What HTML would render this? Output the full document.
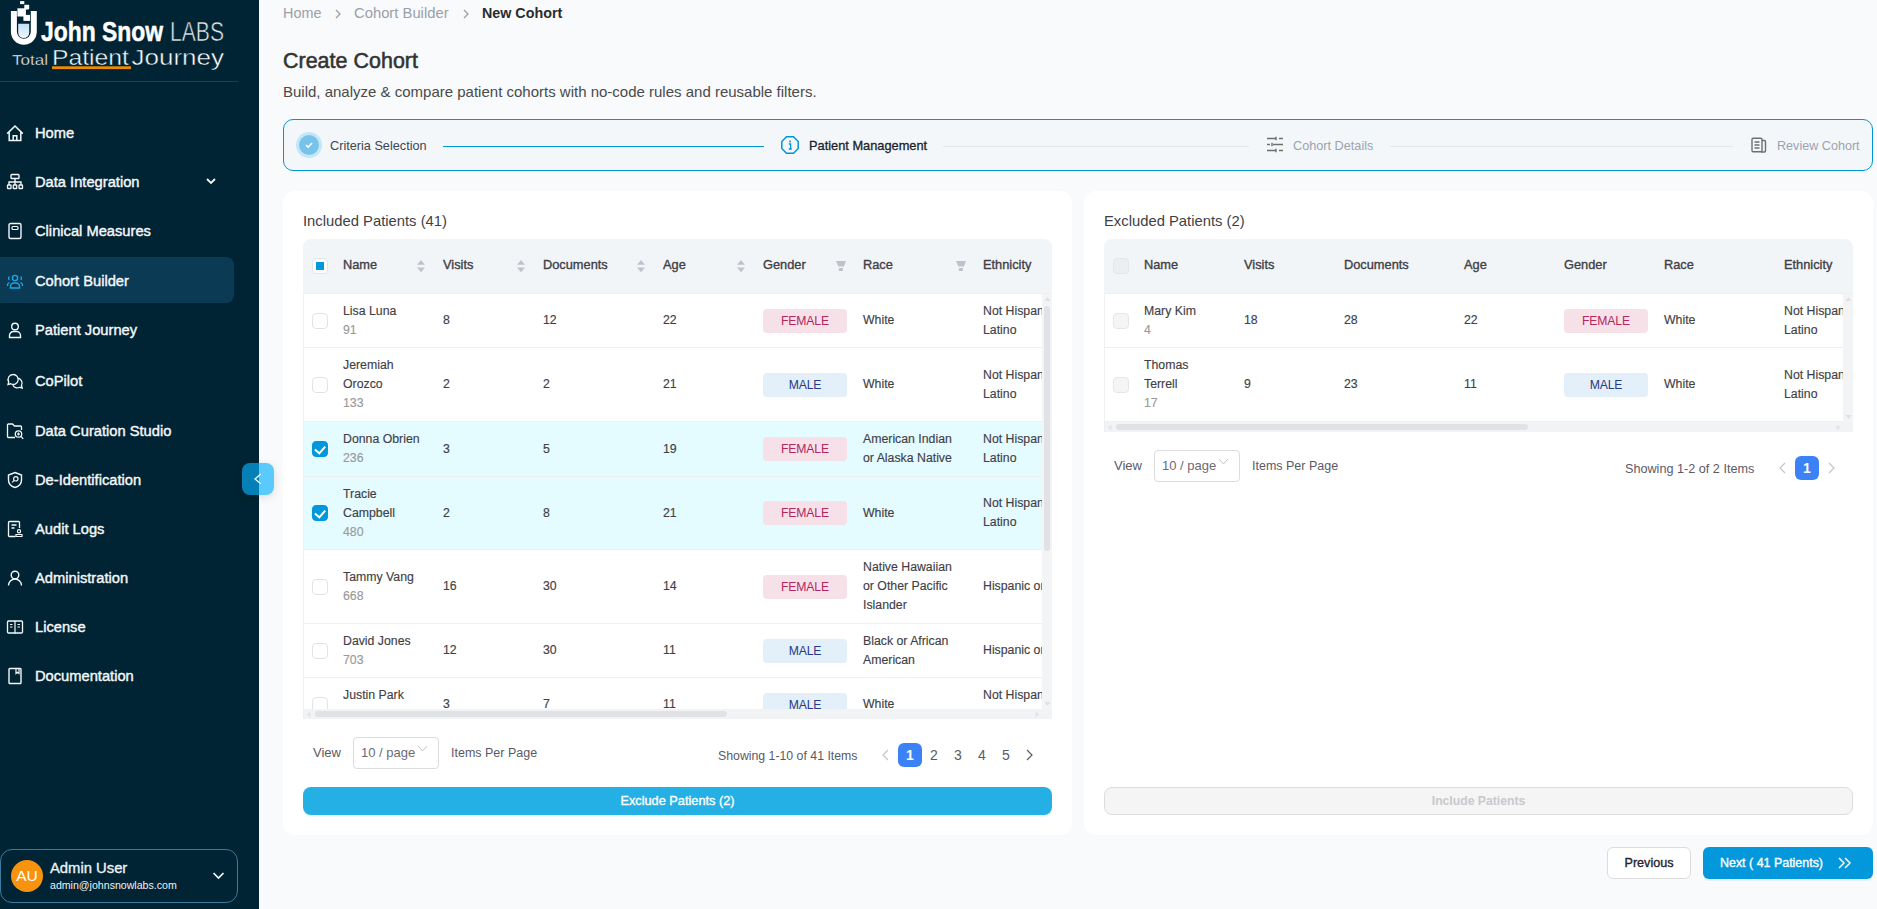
<!DOCTYPE html>
<html><head><meta charset="utf-8"><style>
*{box-sizing:border-box;margin:0;padding:0}
html,body{width:1877px;height:909px;overflow:hidden}
body{position:relative;background:#f8fafc;font-family:"Liberation Sans", sans-serif;color:#3f3f46}
.a{position:absolute;white-space:nowrap}
#sb{position:absolute;left:0;top:0;width:259px;height:909px;background:#002433}
.nav{position:absolute;left:35px;font-size:14.7px;font-weight:400;color:#f4f7fa;line-height:18px;-webkit-text-stroke:0.4px #f4f7fa}
.ic{position:absolute;left:6px;width:18px;height:18px}
.card{position:absolute;background:#fff;border-radius:12px}
.th{position:absolute;font-size:12.8px;font-weight:400;color:#3f3f46;line-height:16px;-webkit-text-stroke:0.35px #3f3f46}
.cell{position:absolute;font-size:12.3px;line-height:19px;color:#3f3f46;-webkit-text-stroke:0.15px currentColor}
.gid{color:#9a9a9a}
.tag{position:absolute;width:84px;height:24px;border-radius:4px;font-size:12.2px;line-height:24px;text-align:center;letter-spacing:-0.15px}
.fe{background:#f7e1e9;color:#b3285c}
.ma{background:#e3eff9;color:#2a3a8a}
.cb{position:absolute;width:16px;height:16px;border:1px solid #e1e3e7;border-radius:4px;background:#fff}
.cbx{background:#0097dc;border-color:#0097dc}
.pg{position:absolute;font-size:13px;color:#5a5a66;line-height:16px}
</style></head><body>

<div id="sb">
<svg class="a" style="left:0;top:0" width="259" height="82" viewBox="0 0 259 82">
<defs><linearGradient id="tg" x1="0" y1="0" x2="0" y2="1"><stop offset="0" stop-color="#c3e1f7"/><stop offset="1" stop-color="#eef7fd"/></linearGradient></defs>
<rect x="20.1" y="1.1" width="4.2" height="3" fill="#fff"/>
<rect x="24.3" y="4.7" width="4.9" height="4.7" rx="0.8" fill="#fff"/>
<rect x="17.4" y="8.3" width="8.5" height="8.2" fill="#fff"/>
<rect x="23.4" y="14.9" width="6.6" height="6" fill="#fff"/>
<path d="M13.9 11 V31.85 a9.95 9.95 0 0 0 19.9 0 V11" fill="none" stroke="#fff" stroke-width="6"/>
<path d="M18.2 23.7 h11 v8.8 a5.5 5.5 0 0 1 -11 0 z" fill="url(#tg)"/>
<text x="41" y="41" font-family="Liberation Sans" font-weight="700" font-size="27.5" fill="#fff" stroke="#fff" stroke-width="0.5" textLength="122" lengthAdjust="spacingAndGlyphs">John Snow</text>
<text x="170" y="41" font-family="Liberation Sans" font-weight="400" font-size="27.5" fill="#e8e8e8" stroke="#002433" stroke-width="0.6" textLength="54" lengthAdjust="spacingAndGlyphs">LABS</text>
<text x="12" y="65" font-family="Liberation Sans" font-size="14.5" fill="#fff" stroke="#002433" stroke-width="0.35" textLength="36" lengthAdjust="spacingAndGlyphs">Total</text>
<text x="52" y="65" font-family="Liberation Sans" font-size="22" fill="#fff" stroke="#002433" stroke-width="0.45" textLength="77" lengthAdjust="spacingAndGlyphs">Patient</text>
<text x="131.5" y="65" font-family="Liberation Sans" font-size="22" fill="#fff" stroke="#002433" stroke-width="0.45" textLength="92.5" lengthAdjust="spacingAndGlyphs">Journey</text>
<rect x="52" y="66.3" width="79" height="2.8" fill="#f08a00"/>
<rect x="0" y="81" width="238" height="1" fill="#16425a"/>
</svg>
<div class="a" style="left:0;top:257px;width:234px;height:46px;background:#0b3a55;border-radius:0 8px 8px 0"></div>
<svg class="ic" style="top:124.2px" viewBox="0 0 18 18"><path d="M1.2 9.6 L9 2 L16.8 9.6 M3.2 7.8 V16.6 H14.8 V7.8 M7.2 16.6 V11.8 H10.8 V16.6" fill="none" stroke="#f4f7fa" stroke-width="1.5" stroke-linejoin="miter"/></svg>
<div class="nav" style="top:124.2px">Home</div>
<svg class="ic" style="top:173.0px" viewBox="0 0 18 18"><rect x="5" y="1.5" width="8" height="4" rx="0.8" fill="none" stroke="#f4f7fa" stroke-width="1.4"/><path d="M9 5.5V9 M3 12V9H15V12 M9 9V12" fill="none" stroke="#f4f7fa" stroke-width="1.4"/><rect x="1.5" y="12" width="3.5" height="3.5" rx="0.6" fill="none" stroke="#f4f7fa" stroke-width="1.3"/><rect x="7.25" y="12" width="3.5" height="3.5" rx="0.6" fill="none" stroke="#f4f7fa" stroke-width="1.3"/><rect x="13" y="12" width="3.5" height="3.5" rx="0.6" fill="none" stroke="#f4f7fa" stroke-width="1.3"/></svg>
<div class="nav" style="top:173.0px">Data Integration</div>
<svg class="ic" style="top:222.2px" viewBox="0 0 18 18"><rect x="3" y="1.5" width="12" height="15" rx="1.5" fill="none" stroke="#f4f7fa" stroke-width="1.4"/><rect x="6" y="4.5" width="6" height="3" rx="1" fill="none" stroke="#f4f7fa" stroke-width="1.2"/></svg>
<div class="nav" style="top:222.2px">Clinical Measures</div>
<svg class="ic" style="top:272.0px" viewBox="0 0 18 18"><circle cx="9" cy="6" r="2.6" fill="none" stroke="#1ea7e4" stroke-width="1.4"/><path d="M4.5 16v-1.5a3.5 3.5 0 0 1 3.5-3.5h2a3.5 3.5 0 0 1 3.5 3.5V16z" fill="none" stroke="#1ea7e4" stroke-width="1.4"/><path d="M3.5 4.5a2 2 0 0 0 0 3.5 M14.5 4.5a2 2 0 0 1 0 3.5 M1.5 14v-1a2.5 2.5 0 0 1 2-2.4 M16.5 14v-1a2.5 2.5 0 0 0 -2-2.4" fill="none" stroke="#1ea7e4" stroke-width="1.3"/></svg>
<div class="nav" style="top:272.0px">Cohort Builder</div>
<svg class="ic" style="top:321.0px" viewBox="0 0 18 18"><circle cx="9" cy="5.5" r="3.3" fill="none" stroke="#f4f7fa" stroke-width="1.4"/><path d="M3.5 16.5v-2a4 4 0 0 1 4-4h3a4 4 0 0 1 4 4v2z" fill="none" stroke="#f4f7fa" stroke-width="1.4"/></svg>
<div class="nav" style="top:321.0px">Patient Journey</div>
<svg class="ic" style="top:372.3px" viewBox="0 0 18 18"><path d="M7 2.5a5 5 0 0 0-4.3 7.5L2 12.5l2.7-.7A5 5 0 1 0 7 2.5z" fill="none" stroke="#f4f7fa" stroke-width="1.3"/><path d="M11.5 6.2a5 5 0 0 1 4 7.3l.7 2.5-2.6-.7a5 5 0 0 1-6.8-2" fill="none" stroke="#f4f7fa" stroke-width="1.3"/></svg>
<div class="nav" style="top:372.3px">CoPilot</div>
<svg class="ic" style="top:422.4px" viewBox="0 0 18 18"><path d="M9 15.5H2.5a1 1 0 0 1-1-1V3a1 1 0 0 1 1-1h4l2 2h6a1 1 0 0 1 1 1v3" fill="none" stroke="#f4f7fa" stroke-width="1.3"/><circle cx="12.5" cy="12" r="3.2" fill="none" stroke="#f4f7fa" stroke-width="1.3"/><path d="M15 14.5l2.3 2.3 M12.5 10.5v3 M11 12h3" fill="none" stroke="#f4f7fa" stroke-width="1.2"/></svg>
<div class="nav" style="top:422.4px">Data Curation Studio</div>
<svg class="ic" style="top:470.9px" viewBox="0 0 18 18"><path d="M9 1.5l6.5 2.5v5c0 4-3 6.5-6.5 7.5C5.5 15.5 2.5 13 2.5 9V4z" fill="none" stroke="#f4f7fa" stroke-width="1.4"/><circle cx="9.8" cy="7.8" r="2.2" fill="none" stroke="#f4f7fa" stroke-width="1.2"/><path d="M8.2 9.4l-2 2" stroke="#f4f7fa" stroke-width="1.2"/></svg>
<div class="nav" style="top:470.9px">De-Identification</div>
<svg class="ic" style="top:520.4px" viewBox="0 0 18 18"><path d="M9.5 16.5H3.5a1 1 0 0 1-1-1V2.5a1 1 0 0 1 1-1h9a1 1 0 0 1 1 1V8" fill="none" stroke="#f4f7fa" stroke-width="1.3"/><path d="M5.5 5h5 M5.5 8h3" stroke="#f4f7fa" stroke-width="1.3"/><circle cx="13" cy="11.3" r="1.6" fill="none" stroke="#f4f7fa" stroke-width="1.2"/><path d="M10 16.5h6v-2h-6z" fill="none" stroke="#f4f7fa" stroke-width="1.2"/></svg>
<div class="nav" style="top:520.4px">Audit Logs</div>
<svg class="ic" style="top:569.2px" viewBox="0 0 18 18"><circle cx="9" cy="6" r="3.8" fill="none" stroke="#f4f7fa" stroke-width="1.4"/><path d="M2.5 16.5a6.5 6.5 0 0 1 13 0" fill="none" stroke="#f4f7fa" stroke-width="1.4"/></svg>
<div class="nav" style="top:569.2px">Administration</div>
<svg class="ic" style="top:618.0px" viewBox="0 0 18 18"><rect x="1.5" y="3" width="15" height="12" rx="1" fill="none" stroke="#f4f7fa" stroke-width="1.3"/><path d="M9 3v12.5 M4 6.5h2.5 M4 9h2.5 M11.5 6.5H14 M11.5 9H14" stroke="#f4f7fa" stroke-width="1.2"/></svg>
<div class="nav" style="top:618.0px">License</div>
<svg class="ic" style="top:667.0px" viewBox="0 0 18 18"><rect x="3" y="1.5" width="12" height="15" rx="0.8" fill="none" stroke="#f4f7fa" stroke-width="1.4"/><path d="M10 1.5v5l1.5-1.2 1.5 1.2v-5" fill="none" stroke="#f4f7fa" stroke-width="1.2"/></svg>
<div class="nav" style="top:667.0px">Documentation</div>
<svg class="a" style="left:205px;top:176px" width="12" height="10" viewBox="0 0 12 10"><path d="M2 3l4 4 4-4" fill="none" stroke="#f4f7fa" stroke-width="1.8"/></svg>
<div class="a" style="left:0;top:849px;width:238px;height:54px;border:1px solid #3a7a9c;border-radius:12px"></div>
<div class="a" style="left:11px;top:860px;width:32px;height:32px;border-radius:50%;background:#f7930f;color:#fff;font-size:15.5px;line-height:32px;text-align:center">AU</div>
<div class="a" style="left:50px;top:860px;font-size:14.8px;font-weight:400;color:#eef2f6;-webkit-text-stroke:0.35px #eef2f6;line-height:17px">Admin User</div>
<div class="a" style="left:50px;top:879px;font-size:10.6px;color:#eef2f6;line-height:13px">admin@johnsnowlabs.com</div>
<svg class="a" style="left:212px;top:870px" width="13" height="11" viewBox="0 0 13 11"><path d="M1.5 3l5 5 5-5" fill="none" stroke="#f4f7fa" stroke-width="1.7"/></svg>
</div>
<div class="a" style="left:242px;top:463px;width:32px;height:32px;border-radius:8px;background:rgba(8,176,252,0.66);box-shadow:0 2px 8px rgba(0,0,0,0.12)"></div>
<svg class="a" style="left:252px;top:472px" width="12" height="14" viewBox="0 0 12 14"><path d="M8.8 2L3 7l5.8 4.8" fill="none" stroke="#f0faff" stroke-width="1.3"/></svg>
<div class="a" style="left:283px;top:5px;font-size:14.4px;color:#9aa0a9;line-height:17px">Home</div>
<svg class="a" style="left:333px;top:8px" width="10" height="12" viewBox="0 0 10 12"><path d="M3 2l4 4-4 4" fill="none" stroke="#9aa0a9" stroke-width="1.3"/></svg>
<div class="a" style="left:354px;top:5px;font-size:14.8px;color:#9aa0a9;line-height:17px">Cohort Builder</div>
<svg class="a" style="left:461px;top:8px" width="10" height="12" viewBox="0 0 10 12"><path d="M3 2l4 4-4 4" fill="none" stroke="#9aa0a9" stroke-width="1.3"/></svg>
<div class="a" style="left:482px;top:5px;font-size:14.3px;font-weight:700;color:#2b2b2b;line-height:17px">New Cohort</div>
<div class="a" style="left:283px;top:49px;font-size:21.4px;font-weight:400;color:#333333;line-height:25px;-webkit-text-stroke:0.55px #333333;letter-spacing:0.05px">Create Cohort</div>
<div class="a" style="left:283px;top:83px;font-size:15px;color:#4a4a4a;line-height:17px">Build, analyze &amp; compare patient cohorts with no-code rules and reusable filters.</div>
<div class="a" style="left:283px;top:119px;width:1590px;height:52px;border:1.5px solid #0096da;border-radius:10px;background:#f3f7fa"></div>
<div class="a" style="left:296px;top:132px;width:26px;height:26px;border-radius:50%;background:#c5e5f8"></div>
<div class="a" style="left:299px;top:135px;width:20px;height:20px;border-radius:50%;background:#78c3ea"></div>
<svg class="a" style="left:303px;top:139px" width="12" height="12" viewBox="0 0 12 12"><path d="M3 6.2l2.1 2L9 4" fill="none" stroke="#fff" stroke-width="1.6"/></svg>
<div class="a" style="left:330px;top:138px;font-size:12.7px;color:#3f4650;line-height:16px">Criteria Selection</div>
<div class="a" style="left:443px;top:145.5px;width:321px;height:1.5px;background:#0096da"></div>
<svg class="a" style="left:780px;top:135px" width="20" height="20" viewBox="0 0 20 20"><path d="M6.5 1.8h7l4.7 4.7v7l-4.7 4.7h-7l-4.7-4.7v-7z" fill="none" stroke="#0096da" stroke-width="1.5"/><circle cx="10" cy="6.6" r="1" fill="#0096da"/><path d="M8.8 9h1.8v5 M8.8 14h3" fill="none" stroke="#0096da" stroke-width="1.4"/></svg>
<div class="a" style="left:809px;top:138px;font-size:12.8px;font-weight:400;color:#1a1f2b;-webkit-text-stroke:0.3px #1a1f2b;line-height:16px">Patient Management</div>
<div class="a" style="left:943px;top:145.5px;width:306px;height:1px;background:#e3e6ea"></div>
<svg class="a" style="left:1266px;top:136px" width="18" height="18" viewBox="0 0 18 18"><path d="M1 2.5h9 M13 2.5h4 M1 8.5h3 M7 8.5h10 M1 14.5h9 M13 14.5h4 M10 0.8v3.5 M6 6.8v3.5 M10 12.8v3.5" fill="none" stroke="#6f6f6f" stroke-width="1.4"/></svg>
<div class="a" style="left:1293px;top:138px;font-size:12.7px;color:#9ca3af;line-height:16px">Cohort Details</div>
<div class="a" style="left:1390px;top:145.5px;width:343px;height:1px;background:#e3e6ea"></div>
<svg class="a" style="left:1751px;top:137px" width="16" height="16" viewBox="0 0 16 16"><rect x="1" y="1.3" width="10" height="13.5" rx="1.2" fill="none" stroke="#6f6f6f" stroke-width="1.4"/><path d="M11 3.5h2.5a1 1 0 0 1 1 1v9.5a1 1 0 0 1-1 1H10" fill="none" stroke="#6f6f6f" stroke-width="1.4"/><path d="M3.5 5h5 M3.5 8h5 M3.5 11h5" stroke="#6f6f6f" stroke-width="1.3"/></svg>
<div class="a" style="left:1777px;top:138px;font-size:12.6px;color:#9ca3af;line-height:16px">Review Cohort</div>
<div class="card" style="left:283px;top:191px;width:789px;height:644px"></div>
<div class="card" style="left:1084px;top:191px;width:789px;height:644px"></div>
<div class="a" style="left:303px;top:213px;font-size:14.8px;color:#3f3f46;line-height:17px">Included Patients (41)</div>
<div class="a" style="left:1104px;top:213px;font-size:14.8px;color:#3f3f46;line-height:17px">Excluded Patients (2)</div>
<div class="a" style="left:303px;top:239px;width:749px;height:55px;background:#f2f5f8;border-bottom:1px solid #edf0f3;border-radius:8px 8px 0 0"></div>
<div class="cb" style="left:312px;top:258px"></div>
<div class="a" style="left:316px;top:262px;width:8px;height:8px;background:#0097dc"></div>
<div class="th" style="left:343px;top:257px">Name</div>
<div class="th" style="left:443px;top:257px">Visits</div>
<div class="th" style="left:543px;top:257px">Documents</div>
<div class="th" style="left:663px;top:257px">Age</div>
<div class="th" style="left:763px;top:257px">Gender</div>
<div class="th" style="left:863px;top:257px">Race</div>
<div class="th" style="left:983px;top:257px">Ethnicity</div>
<svg class="a" style="left:417px;top:260px" width="9" height="13" viewBox="0 0 9 13"><path d="M4 0L8 4.8H0z M4 12.3L8 7.4H0z" fill="#bfc3cc"/></svg>
<svg class="a" style="left:517px;top:260px" width="9" height="13" viewBox="0 0 9 13"><path d="M4 0L8 4.8H0z M4 12.3L8 7.4H0z" fill="#bfc3cc"/></svg>
<svg class="a" style="left:637px;top:260px" width="9" height="13" viewBox="0 0 9 13"><path d="M4 0L8 4.8H0z M4 12.3L8 7.4H0z" fill="#bfc3cc"/></svg>
<svg class="a" style="left:737px;top:260px" width="9" height="13" viewBox="0 0 9 13"><path d="M4 0L8 4.8H0z M4 12.3L8 7.4H0z" fill="#bfc3cc"/></svg>
<svg class="a" style="left:836px;top:261px" width="10" height="10" viewBox="0 0 10 10"><path d="M0 0H10L7.9 5.4H2.3z M2.9 7H6.9V9.9H2.9z" fill="#bfc3cc"/></svg>
<svg class="a" style="left:956px;top:261px" width="10" height="10" viewBox="0 0 10 10"><path d="M0 0H10L7.9 5.4H2.3z M2.9 7H6.9V9.9H2.9z" fill="#bfc3cc"/></svg>
<div class="a" style="left:303px;top:294px;width:739px;height:415px;overflow:hidden">
<div class="a" style="left:0;top:0px;width:739px;height:54px;background:#fff;border-bottom:1px solid #f0f0f0;border-left:1px solid #f0f0f0"></div>
<div class="cb" style="left:9px;top:18.5px;"></div>
<div class="cell" style="left:40px;top:8px"><div>Lisa Luna</div><div class="gid">91</div></div>
<div class="cell" style="left:140px;top:17px">8</div>
<div class="cell" style="left:240px;top:17px">12</div>
<div class="cell" style="left:360px;top:17px">22</div>
<div class="tag fe" style="left:460px;top:15px">FEMALE</div>
<div class="cell" style="left:560px;top:17px"><div>White</div></div>
<div class="cell" style="left:680px;top:8px"><div>Not Hispanic or</div><div>Latino</div></div>
<div class="a" style="left:0;top:54px;width:739px;height:74px;background:#fff;border-bottom:1px solid #f0f0f0;border-left:1px solid #f0f0f0"></div>
<div class="cb" style="left:9px;top:82.5px;"></div>
<div class="cell" style="left:40px;top:62px"><div>Jeremiah</div><div>Orozco</div><div class="gid">133</div></div>
<div class="cell" style="left:140px;top:81px">2</div>
<div class="cell" style="left:240px;top:81px">2</div>
<div class="cell" style="left:360px;top:81px">21</div>
<div class="tag ma" style="left:460px;top:79px">MALE</div>
<div class="cell" style="left:560px;top:81px"><div>White</div></div>
<div class="cell" style="left:680px;top:72px"><div>Not Hispanic or</div><div>Latino</div></div>
<div class="a" style="left:0;top:128px;width:739px;height:55px;background:#e4fbff;border-bottom:1px solid #f0f0f0;border-left:1px solid #f0f0f0"></div>
<div class="cb cbx" style="left:9px;top:147.0px;"><svg width="14" height="14" viewBox="0 0 14 14" style="position:absolute;left:0;top:0"><path d="M1.9 7.4L6.3 11.3L12.2 4.7" fill="none" stroke="#fff" stroke-width="2"/></svg></div>
<div class="cell" style="left:40px;top:136px"><div>Donna Obrien</div><div class="gid">236</div></div>
<div class="cell" style="left:140px;top:146px">3</div>
<div class="cell" style="left:240px;top:146px">5</div>
<div class="cell" style="left:360px;top:146px">19</div>
<div class="tag fe" style="left:460px;top:143px">FEMALE</div>
<div class="cell" style="left:560px;top:136px"><div>American Indian</div><div>or Alaska Native</div></div>
<div class="cell" style="left:680px;top:136px"><div>Not Hispanic or</div><div>Latino</div></div>
<div class="a" style="left:0;top:183px;width:739px;height:73px;background:#e4fbff;border-bottom:1px solid #f0f0f0;border-left:1px solid #f0f0f0"></div>
<div class="cb cbx" style="left:9px;top:211.0px;"><svg width="14" height="14" viewBox="0 0 14 14" style="position:absolute;left:0;top:0"><path d="M1.9 7.4L6.3 11.3L12.2 4.7" fill="none" stroke="#fff" stroke-width="2"/></svg></div>
<div class="cell" style="left:40px;top:191px"><div>Tracie</div><div>Campbell</div><div class="gid">480</div></div>
<div class="cell" style="left:140px;top:210px">2</div>
<div class="cell" style="left:240px;top:210px">8</div>
<div class="cell" style="left:360px;top:210px">21</div>
<div class="tag fe" style="left:460px;top:207px">FEMALE</div>
<div class="cell" style="left:560px;top:210px"><div>White</div></div>
<div class="cell" style="left:680px;top:200px"><div>Not Hispanic or</div><div>Latino</div></div>
<div class="a" style="left:0;top:256px;width:739px;height:74px;background:#fff;border-bottom:1px solid #f0f0f0;border-left:1px solid #f0f0f0"></div>
<div class="cb" style="left:9px;top:284.5px;"></div>
<div class="cell" style="left:40px;top:274px"><div>Tammy Vang</div><div class="gid">668</div></div>
<div class="cell" style="left:140px;top:283px">16</div>
<div class="cell" style="left:240px;top:283px">30</div>
<div class="cell" style="left:360px;top:283px">14</div>
<div class="tag fe" style="left:460px;top:281px">FEMALE</div>
<div class="cell" style="left:560px;top:264px"><div>Native Hawaiian</div><div>or Other Pacific</div><div>Islander</div></div>
<div class="cell" style="left:680px;top:283px"><div>Hispanic or Latino</div></div>
<div class="a" style="left:0;top:330px;width:739px;height:54px;background:#fff;border-bottom:1px solid #f0f0f0;border-left:1px solid #f0f0f0"></div>
<div class="cb" style="left:9px;top:348.5px;"></div>
<div class="cell" style="left:40px;top:338px"><div>David Jones</div><div class="gid">703</div></div>
<div class="cell" style="left:140px;top:347px">12</div>
<div class="cell" style="left:240px;top:347px">30</div>
<div class="cell" style="left:360px;top:347px">11</div>
<div class="tag ma" style="left:460px;top:345px">MALE</div>
<div class="cell" style="left:560px;top:338px"><div>Black or African</div><div>American</div></div>
<div class="cell" style="left:680px;top:347px"><div>Hispanic or Latino</div></div>
<div class="a" style="left:0;top:384px;width:739px;height:54px;background:#fff;border-bottom:1px solid #f0f0f0;border-left:1px solid #f0f0f0"></div>
<div class="cb" style="left:9px;top:402.5px;"></div>
<div class="cell" style="left:40px;top:392px"><div>Justin Park</div><div class="gid">781</div></div>
<div class="cell" style="left:140px;top:401px">3</div>
<div class="cell" style="left:240px;top:401px">7</div>
<div class="cell" style="left:360px;top:401px">11</div>
<div class="tag ma" style="left:460px;top:399px">MALE</div>
<div class="cell" style="left:560px;top:401px"><div>White</div></div>
<div class="cell" style="left:680px;top:392px"><div>Not Hispanic or</div><div>Latino</div></div>
</div>
<div class="a" style="left:1042px;top:294px;width:10px;height:415px;background:#f3f4f6"></div>
<div class="a" style="left:1044px;top:306px;width:6px;height:245px;background:#e1e2e6;border-radius:3px"></div>
<svg class="a" style="left:1044px;top:296px" width="7" height="6" viewBox="0 0 7 6"><path d="M3.5 1L6.5 5H0.5z" fill="#dfe0e4"/></svg>
<svg class="a" style="left:1044px;top:701px" width="7" height="6" viewBox="0 0 7 6"><path d="M3.5 5L6.5 1H0.5z" fill="#dfe0e4"/></svg>
<div class="a" style="left:303px;top:709px;width:749px;height:10px;background:#f2f3f5;border-left:1px solid #eeeeee"></div>
<div class="a" style="left:315px;top:711px;width:412px;height:6px;background:#e1e2e6;border-radius:3px"></div>
<svg class="a" style="left:305px;top:711px" width="7" height="7" viewBox="0 0 7 7"><path d="M1.5 3.5L5.5 0.5V6.5z" fill="#e3e4e8"/></svg>
<svg class="a" style="left:1034px;top:711px" width="7" height="7" viewBox="0 0 7 7"><path d="M5.5 3.5L1.5 0.5V6.5z" fill="#e3e4e8"/></svg>
<div class="a" style="left:1104px;top:239px;width:749px;height:55px;background:#f2f5f8;border-bottom:1px solid #edf0f3;border-radius:8px 8px 0 0"></div>
<div class="cb" style="left:1113px;top:258px;background:#eceef1;border-color:#e4e6e9"></div>
<div class="th" style="left:1144px;top:257px">Name</div>
<div class="th" style="left:1244px;top:257px">Visits</div>
<div class="th" style="left:1344px;top:257px">Documents</div>
<div class="th" style="left:1464px;top:257px">Age</div>
<div class="th" style="left:1564px;top:257px">Gender</div>
<div class="th" style="left:1664px;top:257px">Race</div>
<div class="th" style="left:1784px;top:257px">Ethnicity</div>
<div class="a" style="left:1104px;top:294px;width:739px;height:128px;overflow:hidden">
<div class="a" style="left:0;top:0px;width:739px;height:54px;background:#fff;border-bottom:1px solid #f0f0f0;border-left:1px solid #f0f0f0"></div>
<div class="cb" style="left:9px;top:18.5px;background:#f5f5f5;border-color:#e6e6e6"></div>
<div class="cell" style="left:40px;top:8px"><div>Mary Kim</div><div class="gid">4</div></div>
<div class="cell" style="left:140px;top:17px">18</div>
<div class="cell" style="left:240px;top:17px">28</div>
<div class="cell" style="left:360px;top:17px">22</div>
<div class="tag fe" style="left:460px;top:15px">FEMALE</div>
<div class="cell" style="left:560px;top:17px"><div>White</div></div>
<div class="cell" style="left:680px;top:8px"><div>Not Hispanic or</div><div>Latino</div></div>
<div class="a" style="left:0;top:54px;width:739px;height:74px;background:#fff;border-bottom:1px solid #f0f0f0;border-left:1px solid #f0f0f0"></div>
<div class="cb" style="left:9px;top:82.5px;background:#f5f5f5;border-color:#e6e6e6"></div>
<div class="cell" style="left:40px;top:62px"><div>Thomas</div><div>Terrell</div><div class="gid">17</div></div>
<div class="cell" style="left:140px;top:81px">9</div>
<div class="cell" style="left:240px;top:81px">23</div>
<div class="cell" style="left:360px;top:81px">11</div>
<div class="tag ma" style="left:460px;top:79px">MALE</div>
<div class="cell" style="left:560px;top:81px"><div>White</div></div>
<div class="cell" style="left:680px;top:72px"><div>Not Hispanic or</div><div>Latino</div></div>
</div>
<div class="a" style="left:1843px;top:294px;width:10px;height:128px;background:#f3f4f6"></div>
<svg class="a" style="left:1845px;top:296px" width="7" height="6" viewBox="0 0 7 6"><path d="M3.5 1L6.5 5H0.5z" fill="#dfe0e4"/></svg>
<svg class="a" style="left:1845px;top:414px" width="7" height="6" viewBox="0 0 7 6"><path d="M3.5 5L6.5 1H0.5z" fill="#dfe0e4"/></svg>
<div class="a" style="left:1104px;top:422px;width:749px;height:10px;background:#f2f3f5;border-left:1px solid #eeeeee"></div>
<div class="a" style="left:1116px;top:424px;width:412px;height:6px;background:#e1e2e6;border-radius:3px"></div>
<svg class="a" style="left:1106px;top:424px" width="7" height="7" viewBox="0 0 7 7"><path d="M1.5 3.5L5.5 0.5V6.5z" fill="#e3e4e8"/></svg>
<svg class="a" style="left:1835px;top:424px" width="7" height="7" viewBox="0 0 7 7"><path d="M5.5 3.5L1.5 0.5V6.5z" fill="#e3e4e8"/></svg>
<div class="pg" style="left:313px;top:745px">View</div>
<div class="a" style="left:353px;top:737px;width:86px;height:32px;border:1px solid #dcdcdc;border-radius:4px;background:#fff"></div>
<div class="pg" style="left:361px;top:745px;color:#6b6b75">10 / page</div>
<svg class="a" style="left:417px;top:745px" width="11" height="8" viewBox="0 0 11 8"><path d="M1 1l4.5 5L10 1" fill="none" stroke="#c4c4c8" stroke-width="1"/></svg>
<div class="pg" style="left:451px;top:745px;font-size:12.5px">Items Per Page</div>
<div class="pg" style="left:718px;top:748px;font-size:12.3px">Showing 1-10 of 41 Items</div>
<svg class="a" style="left:881px;top:749px" width="9" height="12" viewBox="0 0 9 12"><path d="M7 1L2 6l5 5" fill="none" stroke="#c4c4c4" stroke-width="1.2"/></svg>
<div class="a" style="left:898px;top:743px;width:24px;height:24px;border-radius:6px;background:#3b82f6;color:#fff;font-size:14px;font-weight:700;line-height:24px;text-align:center">1</div>
<div class="a" style="left:922px;top:743px;width:24px;height:24px;color:#5a5a66;font-size:14px;line-height:24px;text-align:center">2</div>
<div class="a" style="left:946px;top:743px;width:24px;height:24px;color:#5a5a66;font-size:14px;line-height:24px;text-align:center">3</div>
<div class="a" style="left:970px;top:743px;width:24px;height:24px;color:#5a5a66;font-size:14px;line-height:24px;text-align:center">4</div>
<div class="a" style="left:994px;top:743px;width:24px;height:24px;color:#5a5a66;font-size:14px;line-height:24px;text-align:center">5</div>
<svg class="a" style="left:1025px;top:749px" width="9" height="12" viewBox="0 0 9 12"><path d="M2 1l5 5-5 5" fill="none" stroke="#5a5a66" stroke-width="1.2"/></svg>
<div class="pg" style="left:1114px;top:458px">View</div>
<div class="a" style="left:1154px;top:450px;width:86px;height:32px;border:1px solid #dcdcdc;border-radius:4px;background:#fff"></div>
<div class="pg" style="left:1162px;top:458px;color:#6b6b75">10 / page</div>
<svg class="a" style="left:1218px;top:458px" width="11" height="8" viewBox="0 0 11 8"><path d="M1 1l4.5 5L10 1" fill="none" stroke="#c4c4c8" stroke-width="1"/></svg>
<div class="pg" style="left:1252px;top:458px;font-size:12.5px">Items Per Page</div>
<div class="pg" style="left:1625px;top:461px;font-size:12.65px">Showing 1-2 of 2 Items</div>
<svg class="a" style="left:1778px;top:462px" width="9" height="12" viewBox="0 0 9 12"><path d="M7 1L2 6l5 5" fill="none" stroke="#c4c4c4" stroke-width="1.2"/></svg>
<div class="a" style="left:1795px;top:456px;width:24px;height:24px;border-radius:6px;background:#3b82f6;color:#fff;font-size:14px;font-weight:700;line-height:24px;text-align:center">1</div>
<svg class="a" style="left:1827px;top:462px" width="9" height="12" viewBox="0 0 9 12"><path d="M2 1l5 5-5 5" fill="none" stroke="#c4c4c4" stroke-width="1.2"/></svg>
<div class="a" style="left:303px;top:787px;width:749px;height:28px;border-radius:8px;background:#25b0e5;box-shadow:0 2px 0 rgba(5,145,255,0.08);color:#fff;font-size:12.75px;font-weight:400;-webkit-text-stroke:0.35px #fff;line-height:28px;text-align:center">Exclude Patients (2)</div>
<div class="a" style="left:1104px;top:787px;width:749px;height:28px;border-radius:8px;background:#f5f5f5;border:1px solid #dcdcdc;color:#c8c9cd;font-size:12.2px;font-weight:700;line-height:26px;text-align:center">Include Patients</div>
<div class="a" style="left:1607px;top:847px;width:84px;height:32px;border-radius:6px;background:#fff;border:1px solid #dcdcdc;color:#1f2430;font-size:12.6px;font-weight:400;-webkit-text-stroke:0.35px #1f2430;line-height:30px;text-align:center">Previous</div>
<div class="a" style="left:1703px;top:847px;width:170px;height:32px;border-radius:6px;background:#0398dc;box-shadow:0 2px 0 rgba(5,145,255,0.08);color:#fff;font-size:12.45px;font-weight:400;-webkit-text-stroke:0.35px #fff;line-height:32px"><span style="position:absolute;left:17px">Next ( 41 Patients)</span></div>
<svg class="a" style="left:1837px;top:856px" width="15" height="14" viewBox="0 0 15 14"><path d="M2 2l5 5-5 5 M8 2l5 5-5 5" fill="none" stroke="#fff" stroke-width="1.5"/></svg>
</body></html>
